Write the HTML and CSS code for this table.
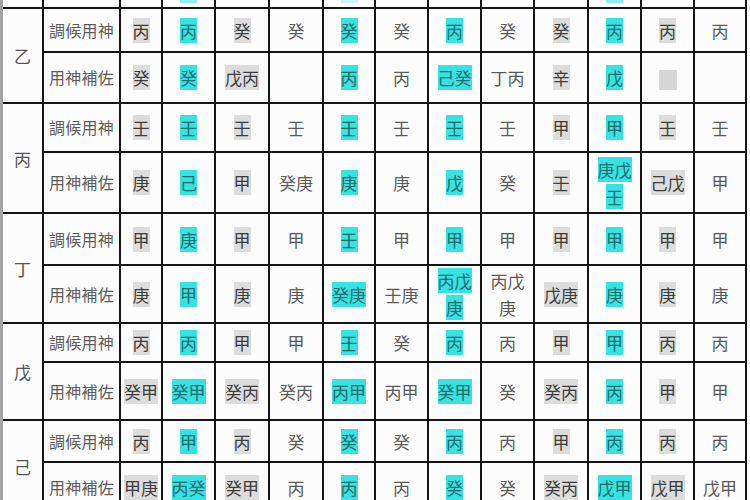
FILE: index.html
```html
<!DOCTYPE html>
<html lang="zh-Hant">
<head>
<meta charset="utf-8">
<title>調候用神表</title>
<link rel="stylesheet" href="styles.css">
</head>
<body>
<div class="frame">
<table class="sheet">
  <colgroup>
    <col class="w-stem"><col class="w-label">
    <col class="w40"><col class="w51"><col class="w52"><col class="w52"><col class="w50"><col class="w51">
    <col class="w51"><col class="w51"><col class="w52"><col class="w51"><col class="w51"><col class="w50">
  </colgroup>
  <tr class="r-top">
    <td></td><td></td><td></td><td><i class="peek"></i></td><td></td><td></td><td><i class="peek faint"></i></td>
    <td></td><td></td><td></td><td></td><td><i class="peek"></i></td><td></td><td></td>
  </tr>

  <tr class="r1">
    <td class="stem" rowspan="2">乙</td>
    <td class="label">調候用神</td>
    <td class="g"><span>丙</span></td><td class="q"><span>丙</span></td><td class="g"><span>癸</span></td><td><span>癸</span></td>
    <td class="q"><span>癸</span></td><td><span>癸</span></td><td class="q"><span>丙</span></td><td><span>癸</span></td>
    <td class="g"><span>癸</span></td><td class="q"><span>丙</span></td><td class="g"><span>丙</span></td><td><span>丙</span></td>
  </tr>
  <tr class="r2">
    <td class="label">用神補佐</td>
    <td class="g"><span>癸</span></td><td class="q"><span>癸</span></td><td class="g"><span>戊丙</span></td><td></td>
    <td class="q"><span>丙</span></td><td><span>丙</span></td><td class="q"><span>己癸</span></td><td><span>丁丙</span></td>
    <td class="g"><span>辛</span></td><td class="q"><span>戊</span></td><td class="g"><b class="blank"></b></td><td></td>
  </tr>

  <tr class="r3">
    <td class="stem" rowspan="2">丙</td>
    <td class="label">調候用神</td>
    <td class="g"><span>壬</span></td><td class="q"><span>壬</span></td><td class="g"><span>壬</span></td><td><span>壬</span></td>
    <td class="q"><span>壬</span></td><td><span>壬</span></td><td class="q"><span>壬</span></td><td><span>壬</span></td>
    <td class="g"><span>甲</span></td><td class="q"><span>甲</span></td><td class="g"><span>壬</span></td><td><span>壬</span></td>
  </tr>
  <tr class="r4">
    <td class="label">用神補佐</td>
    <td class="g"><span>庚</span></td><td class="q"><span>己</span></td><td class="g"><span>甲</span></td><td><span>癸庚</span></td>
    <td class="q"><span>庚</span></td><td><span>庚</span></td><td class="q"><span>戊</span></td><td><span>癸</span></td>
    <td class="g"><span>壬</span></td><td class="q"><span>庚戊壬</span></td><td class="g"><span>己戊</span></td><td><span>甲</span></td>
  </tr>

  <tr class="r5">
    <td class="stem" rowspan="2">丁</td>
    <td class="label">調候用神</td>
    <td class="g"><span>甲</span></td><td class="q"><span>庚</span></td><td class="g"><span>甲</span></td><td><span>甲</span></td>
    <td class="q"><span>壬</span></td><td><span>甲</span></td><td class="q"><span>甲</span></td><td><span>甲</span></td>
    <td class="g"><span>甲</span></td><td class="q"><span>甲</span></td><td class="g"><span>甲</span></td><td><span>甲</span></td>
  </tr>
  <tr class="r6">
    <td class="label">用神補佐</td>
    <td class="g"><span>庚</span></td><td class="q"><span>甲</span></td><td class="g"><span>庚</span></td><td><span>庚</span></td>
    <td class="q"><span>癸庚</span></td><td><span>壬庚</span></td><td class="q"><span>丙戊庚</span></td><td><span>丙戊庚</span></td>
    <td class="g"><span>戊庚</span></td><td class="q"><span>庚</span></td><td class="g"><span>庚</span></td><td><span>庚</span></td>
  </tr>

  <tr class="r7">
    <td class="stem" rowspan="2">戊</td>
    <td class="label">調候用神</td>
    <td class="g"><span>丙</span></td><td class="q"><span>丙</span></td><td class="g"><span>甲</span></td><td><span>甲</span></td>
    <td class="q"><span>壬</span></td><td><span>癸</span></td><td class="q"><span>丙</span></td><td><span>丙</span></td>
    <td class="g"><span>甲</span></td><td class="q"><span>甲</span></td><td class="g"><span>丙</span></td><td><span>丙</span></td>
  </tr>
  <tr class="r8">
    <td class="label">用神補佐</td>
    <td class="g"><span>癸甲</span></td><td class="q"><span>癸甲</span></td><td class="g"><span>癸丙</span></td><td><span>癸丙</span></td>
    <td class="q"><span>丙甲</span></td><td><span>丙甲</span></td><td class="q"><span>癸甲</span></td><td><span>癸</span></td>
    <td class="g"><span>癸丙</span></td><td class="q"><span>丙</span></td><td class="g"><span>甲</span></td><td><span>甲</span></td>
  </tr>

  <tr class="r9">
    <td class="stem" rowspan="2">己</td>
    <td class="label">調候用神</td>
    <td class="g"><span>丙</span></td><td class="q"><span>甲</span></td><td class="g"><span>丙</span></td><td><span>癸</span></td>
    <td class="q"><span>癸</span></td><td><span>癸</span></td><td class="q"><span>丙</span></td><td><span>丙</span></td>
    <td class="g"><span>甲</span></td><td class="q"><span>丙</span></td><td class="g"><span>丙</span></td><td><span>丙</span></td>
  </tr>
  <tr class="r10">
    <td class="label">用神補佐</td>
    <td class="g"><span>甲庚</span></td><td class="q"><span>丙癸</span></td><td class="g"><span>癸甲</span></td><td><span>丙</span></td>
    <td class="q"><span>丙</span></td><td><span>丙</span></td><td class="q"><span>癸</span></td><td><span>癸</span></td>
    <td class="g"><span>癸丙</span></td><td class="q"><span>戊甲</span></td><td class="g"><span>戊甲</span></td><td><span>戊甲</span></td>
  </tr>
</table>
</div>
</body>
</html>
```

FILE: styles.css
```css
html, body {
  margin: 0;
  padding: 0;
  background: #fcfcfc;
}

body {
  width: 750px;
  height: 500px;
  overflow: hidden;
  font-family: "Noto Sans CJK TC", "Noto Sans CJK SC", sans-serif;
}

.frame {
  width: 744px;
  height: 500px;
  border-left: 3px solid #a4a4a4;
  overflow: hidden;
}

.sheet {
  table-layout: fixed;
  width: 746px;
  margin: -2px 0 0 -2px;
  border-collapse: separate;
  border-spacing: 2px;
  background: #141414;
}

.w-stem { width: 39px; }
.w-label { width: 75px; }
.w40 { width: 40px; }
.w50 { width: 50px; }
.w51 { width: 51px; }
.w52 { width: 52px; }

.sheet td {
  background: #fcfcfc;
  text-align: center;
  vertical-align: middle;
  padding: 0 3px;
  font-size: 17px;
  line-height: 27px;
  color: #5a5a5a;
  overflow: hidden;
}

.r-top { height: 7px; }
.r1 { height: 42px; }
.r2 { height: 49px; }
.r3 { height: 47px; }
.r4 { height: 59px; }
.r5 { height: 50px; }
.r6 { height: 56px; }
.r7 { height: 37px; }
.r8 { height: 56px; }
.r9 { height: 40px; }
.r10 { height: 48px; }

.r-top td {
  vertical-align: top;
  font-size: 0;
  line-height: 0;
  padding: 0;
}

.peek {
  display: inline-block;
  width: 17px;
  height: 3px;
  background: #8eeeee;
}

.peek.faint {
  background: #c8f4f4;
}

.sheet td.stem {
  padding: 0;
  color: #555555;
}

.sheet td.label {
  padding: 0;
  font-size: 16px;
  color: #5c5c5c;
  letter-spacing: 0.3px;
}

.g span {
  background: #dcdcdc;
  color: #3c3c3c;
}

.q span {
  background: #36e2e2;
  color: #1f6c6c;
}

.blank {
  display: inline-block;
  width: 18px;
  height: 20px;
  vertical-align: middle;
  background: #d6d6d6;
}
```
